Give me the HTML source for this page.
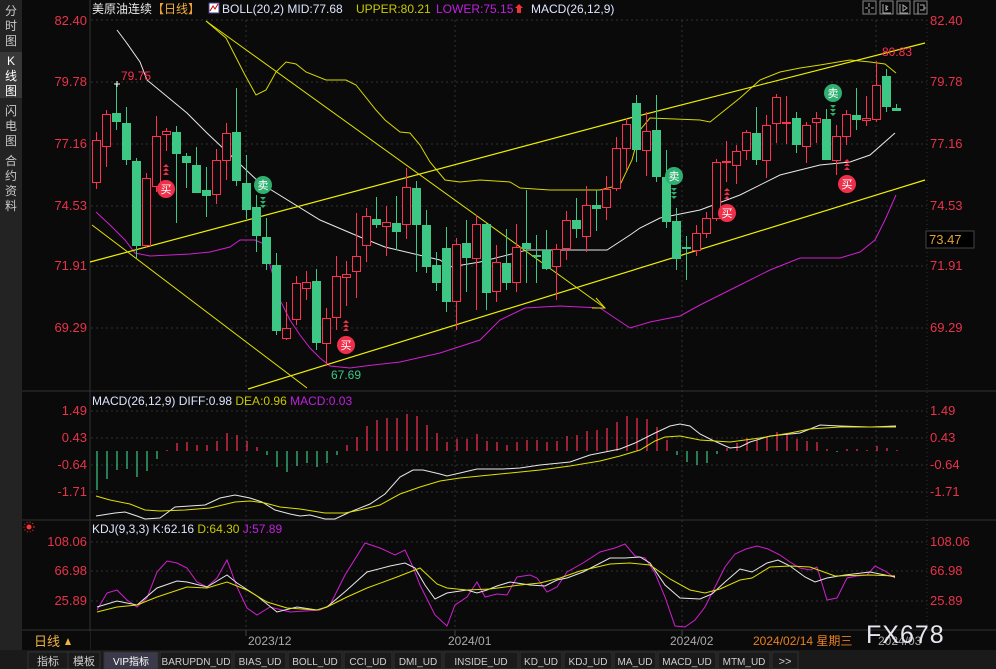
<!DOCTYPE html>
<html><head><meta charset="utf-8"><style>
html,body{margin:0;padding:0;background:#0a0a0a;width:996px;height:669px;overflow:hidden;font-family:"Liberation Sans","Noto Sans CJK SC",sans-serif}
svg{position:absolute;left:0;top:0}
</style></head><body>
<svg id="s" width="996" height="669" xmlns="http://www.w3.org/2000/svg" font-family="Liberation Sans, Noto Sans CJK SC, sans-serif">
<rect width="996" height="669" fill="#0a0a0a"/>
<rect x="0" y="0" width="22" height="650" fill="#232323"/>
<rect x="0" y="52" width="22" height="46" fill="#383838"/>
<g fill="#c8c8c8" font-size="12" text-anchor="middle">
<text x="11" y="15">分</text><text x="11" y="30">时</text><text x="11" y="45">图</text>
<text x="11" y="65" fill="#fff">K</text><text x="11" y="80" fill="#fff">线</text><text x="11" y="95" fill="#fff">图</text>
<text x="11" y="115">闪</text><text x="11" y="130">电</text><text x="11" y="145">图</text>
<text x="11" y="165">合</text><text x="11" y="180">约</text><text x="11" y="195">资</text><text x="11" y="210">料</text>
</g>
<line x1="90" y1="0" x2="90" y2="650" stroke="#333"/>
<line x1="22" y1="391" x2="996" y2="391" stroke="#333"/>
<line x1="22" y1="520" x2="996" y2="520" stroke="#333"/>
<line x1="22" y1="630" x2="996" y2="630" stroke="#333"/>
<line x1="927" y1="20" x2="927" y2="630" stroke="#333" stroke-dasharray="1,3"/>
<g id="grid" stroke="#333" stroke-dasharray="2,3"></g>
<text x="92" y="13" font-size="12" fill="#e8e8e8">美原油连续<tspan fill="#f0a030">【</tspan><tspan fill="#f0b040">日线</tspan><tspan fill="#f0a030">】</tspan></text>
<rect x="209" y="3" width="10" height="10" fill="#fff" stroke="#448"/>
<path d="M210 11 L213 6 L215 9 L218 4" stroke="#c00" fill="none"/>
<text x="222" y="13" font-size="12" fill="#dfe4ff">BOLL(20,2) MID:77.68</text>
<text x="356" y="13" font-size="12" fill="#c8c800">UPPER:80.21</text>
<text x="436" y="13" font-size="12" fill="#c020e0">LOWER:75.15</text>
<path d="M519 4 l4 4 h-2 v5 h-4 v-5 h-2z" fill="#e33"/>
<text x="531" y="13" font-size="12" fill="#dfe4ff">MACD(26,12,9)</text>
<g stroke="#888" fill="none"><rect x="863" y="1" width="13" height="13"/><rect x="880" y="1" width="13" height="13"/><rect x="897" y="1" width="13" height="13"/><rect x="914" y="1" width="13" height="13"/></g>
<g stroke="#aaa"><path d="M869 3v4M869 9v4M865 8h3M871 8h3"/><path d="M883 4v9h8M886 5v6M888 6l-2 2 2 2"/><path d="M900 4v9h8M903 5v6l4-3z"/><path d="M918 3v11M920 5h4v5h-4M924 8h2"/></g>
<g font-size="13" fill="#e8334a" text-anchor="end">
<text x="87" y="25">82.40</text><text x="87" y="86">79.78</text><text x="87" y="148">77.16</text><text x="87" y="210">74.53</text><text x="87" y="270">71.91</text><text x="87" y="332">69.29</text>
<text x="87" y="415">1.49</text><text x="87" y="442">0.43</text><text x="87" y="469">-0.64</text><text x="87" y="496">-1.71</text>
<text x="87" y="546">108.06</text><text x="87" y="575">66.98</text><text x="87" y="605">25.89</text>
</g>
<g font-size="13" fill="#e8334a">
<text x="930" y="25">82.40</text><text x="930" y="86">79.78</text><text x="930" y="148">77.16</text><text x="930" y="210">74.53</text><text x="930" y="270">71.91</text><text x="930" y="332">69.29</text>
<text x="930" y="415">1.49</text><text x="930" y="442">0.43</text><text x="930" y="469">-0.64</text><text x="930" y="496">-1.71</text>
<text x="930" y="546">108.06</text><text x="930" y="575">66.98</text><text x="930" y="605">25.89</text>
</g>
<rect x="926" y="231" width="48" height="17" fill="#000" stroke="#444"/>
<text x="929" y="244" font-size="13" fill="#e8a030">73.47</text>
<g id="main"></g>
<text x="92" y="405" font-size="12" fill="#dfe4ff">MACD(26,12,9) DIFF:0.98 <tspan fill="#c8c800">DEA:0.96</tspan> <tspan fill="#c020e0">MACD:0.03</tspan></text>
<text x="92" y="533" font-size="12" fill="#dfe4ff">KDJ(9,3,3) K:62.16 <tspan fill="#c8c800">D:64.30</tspan> <tspan fill="#c020e0">J:57.89</tspan></text>
<circle cx="29" cy="527" r="2.5" fill="#f33"/><circle cx="29" cy="527" r="5" fill="none" stroke="#f33" stroke-dasharray="1,2"/>
<rect x="22" y="631" width="68" height="19" fill="#0a0a0a"/>
<text x="34" y="646" font-size="13" fill="#f0b040">日线</text><path d="M65 645l3-7 3 7z" fill="#f0b040"/>
<g font-size="12" fill="#aaa"><text x="248" y="645">2023/12</text><text x="448" y="645">2024/01</text><text x="670" y="645">2024/02</text><text x="878" y="645">2024/03</text></g>
<g stroke="#444"><line x1="246" y1="630" x2="246" y2="636"/><line x1="455" y1="630" x2="455" y2="636"/><line x1="682" y1="630" x2="682" y2="636"/></g>
<rect x="750" y="632" width="124" height="17" fill="#0a0a0a"/>
<text x="753" y="645" font-size="12" fill="#e88020">2024/02/14 星期三</text>
<text x="866" y="643" font-size="25" fill="#e6e6f0" letter-spacing="1">FX678</text>
<rect x="0" y="650" width="996" height="19" fill="#1a1a1a"/>
<g id="tabs" font-size="11" fill="#cfcfcf"></g>
</svg>
<script>
var NS="http://www.w3.org/2000/svg";
function el(p,t,a,txt){var e=document.createElementNS(NS,t);for(var k in a)e.setAttribute(k,a[k]);if(txt)e.textContent=txt;p.appendChild(e);return e;}
var g=document.getElementById('grid');
[20,82,144,206,266,328,411,438,465,492,542,571,601].forEach(function(y){el(g,'line',{x1:91,y1:y,x2:927,y2:y});});
[246,455,682,876].forEach(function(x){el(g,'line',{x1:x,y1:20,x2:x,y2:630});});
var m=document.getElementById('main');
function pl(pts,c,w){el(m,'polyline',{points:pts,fill:'none',stroke:c,'stroke-width':w||1});}
pl("206,21 226,38 245,75 256,95 266,90 276,72 286,62 296,64 306,72 326,80 346,80 356,85 376,110 385,120 400,132 410,133 420,145 430,162 445,180 460,182 480,180 510,182 520,188 550,190 600,190 620,185 632,160 640,130 650,118 700,120 710,122 740,98 760,80 780,72 800,68 820,65 850,60 870,62 885,64 896,73","#d8d800");
pl("117,30 126,42 140,62 147,80 187,113 207,133 260,183 320,220 360,237 385,247 440,260 450,267 480,262 527,250 607,250 630,235 640,228 660,218 700,210 740,195 780,175 820,165 850,162 870,155 895,133","#e8e8e8");
pl("96,212 110,225 125,240 135,253 150,256 170,255 190,254 210,252 230,247 240,240 255,240 262,243 270,265 280,300 290,320 300,335 310,348 320,358 330,366 350,368 365,366 400,362 440,353 480,340 500,320 525,308 560,306 600,308 615,318 630,328 650,322 680,316 700,305 740,285 770,270 800,258 840,258 860,252 875,240 885,220 896,195","#d020d0");
pl("90,262 630,118 925,43","#f0f000",1.2);
pl("248,389 925,180","#f0f000",1.2);
pl("92,225 307,388","#e0e000");
pl("206,21 605,308","#e0e000");
pl("596,298 605,308 592,308","#e0e000");
var C=[[140,182,132,189,1],[114,146,110,167,1],[113,122,84,130,0],[123,160,107,165,0],[161,246,158,258,0],[178,245,173,248,1],[136,186,116,192,1],[131,134,128,151,1],[132,154,126,223,0],[156,163,153,188,0],[165,193,147,193,0],[190,196,167,217,0],[160,194,149,204,1],[133,160,123,180,1],[132,181,88,186,0],[183,210,155,219,0],[207,236,195,252,0],[237,264,218,270,0],[265,331,253,335,0],[328,338,302,340,1],[283,319,276,325,1],[282,288,271,300,1],[281,343,269,350,0],[318,343,308,366,1],[276,317,256,330,1],[274,277,261,306,1],[256,271,213,298,1],[216,245,208,262,1],
[219,225,197,228,0],[222,226,206,256,1],[223,232,196,250,0],[187,224,168,239,1],[188,225,181,272,0],[225,267,210,273,0],[265,283,252,291,0],[248,302,227,312,0],[244,301,238,330,1],[243,258,220,292,0],[224,258,215,310,1],[224,293,223,310,0],[262,291,245,302,1],[263,283,229,290,0],[247,282,224,292,1],[243,249,190,283,0],[255,256,235,283,0],[250,269,230,270,0],[249,266,244,300,1],[220,248,211,260,1],[220,229,198,238,0],[205,236,186,252,1],[205,209,190,231,0],[189,207,176,220,1],[148,188,137,191,1],[124,148,118,170,1],[103,150,95,162,0],
[131,150,112,176,1],[130,177,95,182,0],[177,222,150,228,0],[221,259,208,270,0],[247,249,236,280,0],[233,250,225,256,1],[218,233,212,238,1],[162,218,159,221,1],[161,162,141,182,1],[151,165,145,184,1],[132,150,130,160,1],[133,160,107,165,0],[125,160,115,178,1],[97,123,94,143,1],[122,123,96,144,1],[118,145,112,153,0],[125,146,122,163,1],[118,122,112,143,1],[119,160,109,160,0],[136,160,125,175,1],[114,136,110,145,1],[115,120,88,130,0],[118,120,96,126,1],[85,119,61,122,1],[76,107,69,112,0],[108,111,104,111,0]];
C.forEach(function(c,i){var x=96+i*10;var col=c[4]?'#ff3050':'#3cc884';
el(m,'line',{x1:x+.5,y1:c[2],x2:x+.5,y2:c[3],stroke:col});
if(c[4])el(m,'rect',{x:x-3.5,y:c[0]+.5,width:8,height:Math.max(1,c[1]-c[0]),fill:'#0a0a0a',stroke:col});
else el(m,'rect',{x:x-4,y:c[0],width:9,height:Math.max(2,c[1]-c[0]),fill:col});});
el(m,'text',{x:121,y:80,'font-size':12,fill:'#ff3050'},'79.75');
el(m,'text',{x:882,y:56,'font-size':12,fill:'#ff3050'},'80.83');
el(m,'text',{x:331,y:379,'font-size':12,fill:'#3cc884'},'67.69');
el(m,'path',{d:'M114 84h6M117 81v6',stroke:'#fff'});
function sig(x,y,buy){var col=buy?'#f0304a':'#30b070';el(m,'circle',{cx:x,cy:y,r:9,fill:col});
el(m,'text',{x:x,y:y+4,'font-size':11,fill:'#fff','text-anchor':'middle'},buy?'买':'卖');
for(var k=0;k<3;k++){var yy=buy?y-14-k*4:y+12+k*4;el(m,'path',{d:buy?('M'+(x-3)+' '+yy+'l3-3 3 3z'):('M'+(x-3)+' '+yy+'l3 3 3-3z'),fill:col});}}
sig(166,189,1);sig(263,185,0);sig(346,345,1);sig(674,176,0);sig(727,213,1);sig(833,93,0);sig(847,184,1);
var H=[-39,-28,-19,-18,-26,-20,-8,1,8,9,6,6,10,18,16,10,4,-4,-16,-21,-15,-12,-16,-12,-4,6,14,25,31,33,33,37,35,26,18,9,12,12,17,10,9,6,9,11,11,9,10,15,16,20,21,23,29,35,33,32,24,11,-4,-11,-14,-12,-3,3,8,13,11,14,19,18,12,10,9,2,-1,2,2,1,5,3,1];
H.forEach(function(h,i){var x=97+i*10;el(m,'line',{x1:x,y1:451,x2:x,y2:451-h,stroke:h>=0?'#ff3050':'#3cc884','stroke-width':1.2});});
pl("96,516 115,513 125,512 137,516 145,519 160,518 175,507 190,506 205,505 220,498 235,495 250,498 262,502 275,510 290,514 300,516 310,515 325,519 335,519 350,512 370,504 385,494 400,477 413,470 423,470 440,474 447,476 460,473 477,469 503,469 520,468 540,465 570,462 590,455 620,449 635,443 655,433 670,426 680,424 690,426 700,434 712,440 730,448 740,447 750,442 770,436 800,433 820,425 840,426 870,427 896,426","#e8e8e8");
pl("96,496 110,500 130,504 145,510 160,511 185,510 210,508 235,502 250,501 265,503 280,507 300,509 325,513 345,513 360,510 380,505 400,494 420,487 440,481 460,478 500,474 540,470 570,466 600,461 620,456 640,450 655,441 665,437 680,436 700,440 730,442 760,438 790,433 810,429 840,427 896,427","#e0e000");
pl("97,610 107,593 117,590 127,600 137,607 147,598 157,572 167,561 177,563 187,568 197,582 207,587 217,578 227,560 237,587 247,608 257,615 270,607 290,612 320,610 330,605 345,575 365,543 380,548 395,555 405,550 413,567 420,585 435,615 447,626 455,605 467,597 477,582 485,597 497,594 507,595 517,577 530,575 537,578 547,592 557,587 567,572 583,563 600,552 615,548 625,544 635,556 645,558 655,573 665,597 675,626 685,627 695,620 705,607 715,587 725,567 735,554 746,549 757,546 768,549 780,555 790,562 800,568 810,570 817,567 827,600 837,598 847,578 857,576 867,575 875,566 885,571 895,578","#d020d0");
pl("97,607 117,601 137,605 157,588 177,581 187,582 207,587 227,575 237,583 257,596 277,612 297,607 317,610 327,607 347,590 367,572 390,566 405,563 415,568 425,585 435,599 447,593 467,590 477,593 487,590 497,586 510,582 530,585 545,586 557,580 567,578 583,572 610,558 625,558 640,557 650,563 665,585 680,598 700,599 712,594 725,582 740,569 752,572 767,563 778,560 790,566 805,577 815,582 827,578 845,575 870,572 895,577","#e8e8e8");
pl("97,612 117,607 137,605 157,597 187,587 207,588 227,582 247,590 267,602 287,608 317,610 327,607 347,597 367,588 397,577 420,568 437,584 447,588 467,590 490,589 520,585 540,583 560,578 580,571 610,564 630,563 650,565 670,579 690,590 705,593 720,589 740,580 752,578 770,567 790,566 810,567 835,576 870,575 895,576","#e0e000");
var T=[["指标",28,40],["模板",68,32],["VIP指标",104,54],["BARUPDN_UD",160,72],["BIAS_UD",234,52],["BOLL_UD",288,54],["CCI_UD",344,48],["DMI_UD",394,48],["INSIDE_UD",444,74],["KD_UD",520,42],["KDJ_UD",564,48],["MA_UD",614,42],["MACD_UD",658,58],["MTM_UD",718,52],[">>",772,26]];
var tb=document.getElementById('tabs');
T.forEach(function(t){el(tb,'rect',{x:t[1],y:652,width:t[2],height:17,fill:t[0]=="VIP指标"?'#3a3a4a':'#1a1a1a',stroke:'#333'});
el(tb,'text',{x:t[1]+t[2]/2,y:665,'text-anchor':'middle',fill:t[0]=="VIP指标"?'#fff':'#cfcfcf','font-size':t[0].match(/[A-Z]/)?10:11},t[0]);});
</script>
</body></html>
